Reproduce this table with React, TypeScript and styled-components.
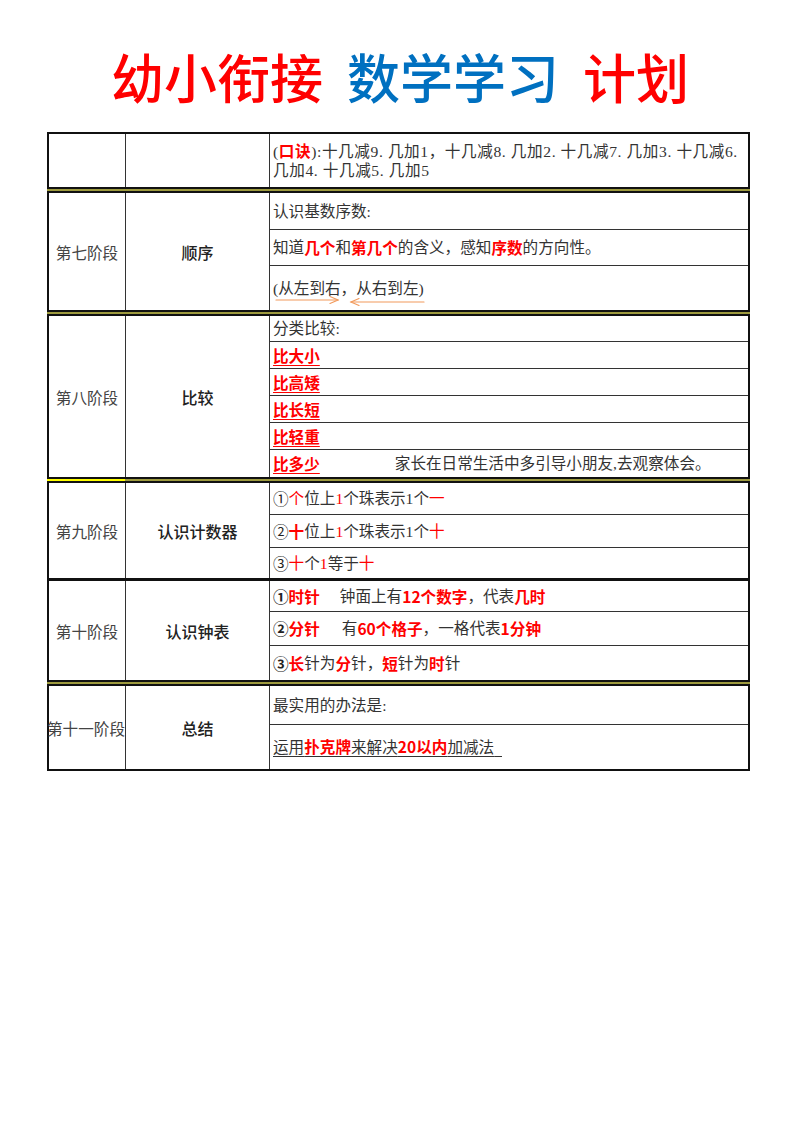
import React, { FC } from 'react';
import styled, { createGlobalStyle } from 'styled-components';

const GlobalStyle = createGlobalStyle`
  html, body {
    margin: 0;
    padding: 0;
    background: #fff;
  }
  body {
    font-family: "Noto Sans CJK SC", "Noto Sans", sans-serif;
    color: #333;
  }
`;

const Page = styled.div`
  width: 800px;
  height: 1132px;
  padding-top: 44px;
  box-sizing: border-box;
`;

const Title = styled.h1`
  margin: 0;
  height: 88px;
  display: flex;
  justify-content: center;
  align-items: flex-start;
  gap: 24px;
  font-size: 53px;
  line-height: 64px;
  font-weight: 500;
`;

const TitleWord = styled.span<{ $color: string }>`
  color: ${(p) => p.$color};
`;

const Table = styled.div`
  width: 703px;
  margin-left: 47px;
  display: flex;
  flex-direction: column;
`;

const Section = styled.div<{ $thinTop?: boolean }>`
  display: grid;
  grid-template-columns: 77px 144px 1fr;
  border: 2px solid #111;
  border-top-width: ${(p) => (p.$thinTop ? 1 : 2)}px;
  box-sizing: border-box;
`;

const Separator = styled.div<{ $first?: string }>`
  height: 2px;
  background: linear-gradient(
    to right,
    ${(p) => p.$first || '#9d9a3e'} 0 78px,
    #9d9a3e 78px 100%
  );
`;

const StageCell = styled.div<{ $overflow?: boolean }>`
  display: flex;
  align-items: center;
  justify-content: ${(p) => (p.$overflow ? 'flex-start' : 'center')};
  margin-left: ${(p) => (p.$overflow ? -2 : 0)}px;
  border-right: 1.5px solid #333;
  font-size: 15.6px;
  color: #444;
  white-space: nowrap;
`;

const TopicCell = styled.div`
  display: flex;
  align-items: center;
  justify-content: center;
  border-right: 1.5px solid #333;
  font-size: 16px;
  font-weight: 500;
  color: #222;
`;

const Rows = styled.div`
  display: flex;
  flex-direction: column;
`;

const Row = styled.div<{ $h: number; $wrap?: boolean }>`
  height: ${(p) => p.$h}px;
  display: flex;
  align-items: center;
  padding-left: 3px;
  box-sizing: border-box;
  font-family: "Liberation Serif", "Noto Sans CJK SC", serif;
  font-size: 15.6px;
  line-height: 19px;
  color: #333;
  white-space: ${(p) => (p.$wrap ? 'normal' : 'nowrap')};
  letter-spacing: ${(p) => (p.$wrap ? 0.6 : 0)}px;
  &:not(:last-child) {
    border-bottom: 1.5px solid #333;
  }
`;

const Red = styled.span<{ $underline?: boolean; $light?: boolean }>`
  color: #ff0000;
  font-family: ${(p) => (p.$light ? 'inherit' : '"Noto Sans CJK SC", sans-serif')};
  font-weight: ${(p) => (p.$light ? 400 : 700)};
  text-decoration: ${(p) => (p.$underline ? 'underline' : 'none')};
  text-underline-offset: 3px;
`;

const Circled = styled.span<{ $bold?: boolean }>`
  font-family: "Noto Sans CJK SC", sans-serif;
  font-weight: ${(p) => (p.$bold ? 700 : 400)};
  color: #222;
`;

const Gap = styled.span<{ $w: number }>`
  display: inline-block;
  width: ${(p) => p.$w}px;
`;

const Underlined = styled.span`
  text-decoration: underline;
  text-underline-offset: 3px;
  white-space: pre;
`;

const ArrowLine = styled.span`
  position: relative;
  display: inline-block;
`;

const ArrowSvg = styled.svg`
  position: absolute;
  left: 0;
  top: 16px;
`;

const Arrows: FC = () => (
  <ArrowSvg width="160" height="14" viewBox="0 0 160 14">
    <g stroke="#f29a5c" strokeWidth="1.2" fill="none" strokeLinecap="round">
      <line x1="3" y1="5" x2="65" y2="5" />
      <polyline points="57,1.5 65,5 57,8.5" />
      <line x1="78" y1="7" x2="151" y2="7" />
      <polyline points="86,3.5 78,7 86,10.5" />
    </g>
  </ArrowSvg>
);

export default function App() {
  return (
    <Page>
      <GlobalStyle />
      <Title>
        <TitleWord $color="#ff0000">幼小衔接</TitleWord>
        <TitleWord $color="#0070c0">数学学习</TitleWord>
        <TitleWord $color="#ff0000">计划</TitleWord>
      </Title>

      <Table>
        <Section>
          <StageCell />
          <TopicCell />
          <Rows>
            <Row $h={53} $wrap>
              <div>
                (<Red>口诀</Red>):十几减9. 几加1，十几减8. 几加2. 十几减7. 几加3. 十几减6.
                <br />
                几加4. 十几减5. 几加5
              </div>
            </Row>
          </Rows>
        </Section>
        <Separator />

        <Section>
          <StageCell>第七阶段</StageCell>
          <TopicCell>顺序</TopicCell>
          <Rows>
            <Row $h={37}>认识基数序数:</Row>
            <Row $h={36}>
              知道<Red>几个</Red>和<Red>第几个</Red>的含义，感知<Red>序数</Red>的方向性。
            </Row>
            <Row $h={44}>
              <ArrowLine>
                (从左到右，从右到左)
                <Arrows />
              </ArrowLine>
            </Row>
          </Rows>
        </Section>
        <Separator />

        <Section>
          <StageCell>第八阶段</StageCell>
          <TopicCell>比较</TopicCell>
          <Rows>
            <Row $h={26}>分类比较:</Row>
            <Row $h={27}>
              <Red $underline>比大小</Red>
            </Row>
            <Row $h={27}>
              <Red $underline>比高矮</Red>
            </Row>
            <Row $h={27}>
              <Red $underline>比长短</Red>
            </Row>
            <Row $h={27}>
              <Red $underline>比轻重</Red>
            </Row>
            <Row $h={27}>
              <Red $underline>比多少</Red>
              <Gap $w={75} />
              家长在日常生活中多引导小朋友,去观察体会。
            </Row>
          </Rows>
        </Section>
        <Separator $first="#ffff00" />

        <Section>
          <StageCell>第九阶段</StageCell>
          <TopicCell>认识计数器</TopicCell>
          <Rows>
            <Row $h={32}>
              <Circled>①</Circled>
              <Red $light>个</Red>位上<Red $light>1</Red>个珠表示1个<Red $light>一</Red>
            </Row>
            <Row $h={33}>
              <Circled>②</Circled>
              <Red>十</Red>位上<Red $light>1</Red>个珠表示1个<Red $light>十</Red>
            </Row>
            <Row $h={30}>
              <Circled>③</Circled>
              <Red $light>十</Red>个<Red $light>1</Red>等于<Red $light>十</Red>
            </Row>
          </Rows>
        </Section>

        <Section $thinTop>
          <StageCell>第十阶段</StageCell>
          <TopicCell>认识钟表</TopicCell>
          <Rows>
            <Row $h={31}>
              <Circled $bold>①</Circled>
              <Red>时针</Red>
              <Gap $w={20} />
              钟面上有<Red>12个数字</Red>，代表<Red>几时</Red>
            </Row>
            <Row $h={34}>
              <Circled $bold>②</Circled>
              <Red>分针</Red>
              <Gap $w={22} />
              有<Red>60个格子</Red>，一格代表<Red>1分钟</Red>
            </Row>
            <Row $h={34}>
              <Circled $bold>③</Circled>
              <Red>长</Red>针为<Red>分</Red>针，<Red>短</Red>针为<Red>时</Red>针
            </Row>
          </Rows>
        </Section>
        <Separator />

        <Section>
          <StageCell $overflow>第十一阶段</StageCell>
          <TopicCell>总结</TopicCell>
          <Rows>
            <Row $h={39}>最实用的办法是:</Row>
            <Row $h={44}>
              <Underlined>
                运用<Red>扑克牌</Red>来解决<Red>20以内</Red>加减法{'  '}
              </Underlined>
            </Row>
          </Rows>
        </Section>
      </Table>
    </Page>
  );
}
